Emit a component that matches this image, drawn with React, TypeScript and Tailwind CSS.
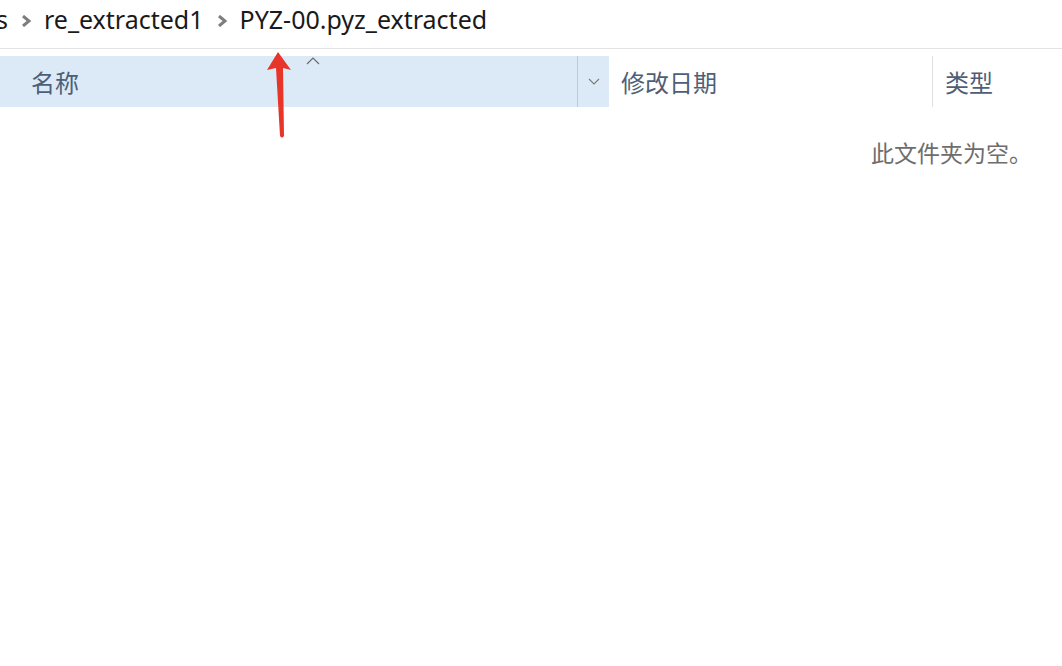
const uiFont = { fontFamily: '"Noto Sans", "Noto Sans CJK SC", sans-serif' };

const Crumb = () => (
  <svg className="mx-[13px] mt-[2px]" width="10" height="12" viewBox="0 0 10 12">
    <path d="M2 1 L8 6 L2 11" fill="none" stroke="#7d7d7d" strokeWidth="3" strokeLinejoin="miter" />
  </svg>
);

export default function App() {
  return (
    <div className="relative w-[1062px] h-[666px] bg-white overflow-hidden" style={uiFont}>
      {/* 地址栏 */}
      <div className="h-[49px] border-b border-[#e3e3e3] flex items-center -ml-[4px] pb-[8px] text-[25px] text-[#1a1a1a]">
        <span>s</span>
        <Crumb />
        <span>re_extracted1</span>
        <Crumb />
        <span>PYZ-00.pyz_extracted</span>
      </div>

      {/* 列标题 */}
      <div className="mt-[7px] h-[51px] flex text-[24px] text-[#4d5f78]">
        <div className="w-[577px] bg-[#dce9f7] flex items-center pl-[31px] pt-[3px] relative">
          <span>名称</span>
          <svg className="absolute left-[306px] top-[1px]" width="14" height="8" viewBox="0 0 14 8">
            <path d="M1 7 L7 1 L13 7" fill="none" stroke="#6b6b6b" strokeWidth="1.2" />
          </svg>
        </div>
        <div className="w-[32px] bg-[#dce9f7] border-l border-[#bccbdc] flex items-center justify-center">
          <svg width="12" height="7" viewBox="0 0 12 7">
            <path d="M1 1 L6 6 L11 1" fill="none" stroke="#7a7a7a" strokeWidth="1.1" />
          </svg>
        </div>
        <div className="w-[323px] flex items-center pl-[12px] pt-[3px]">
          <span>修改日期</span>
        </div>
        <div className="flex-1 border-l border-[#e0e0e0] flex items-center pl-[12px] pt-[3px]">
          <span>类型</span>
        </div>
      </div>

      {/* 空文件夹提示 */}
      <div className="flex justify-end pr-[30px] pt-[29px] text-[23px] text-[#6d6d6d]">
        此文件夹为空。
      </div>

      {/* 红色箭头 */}
      <svg className="absolute left-[262px] top-[48px]" width="34" height="94" viewBox="0 0 34 94">
        <path d="M16 4 L29 22 L21 20 L22 88 Q20 91 18 88 L14 20 L5 22 Z" fill="#e8352a" />
      </svg>
    </div>
  );
}
